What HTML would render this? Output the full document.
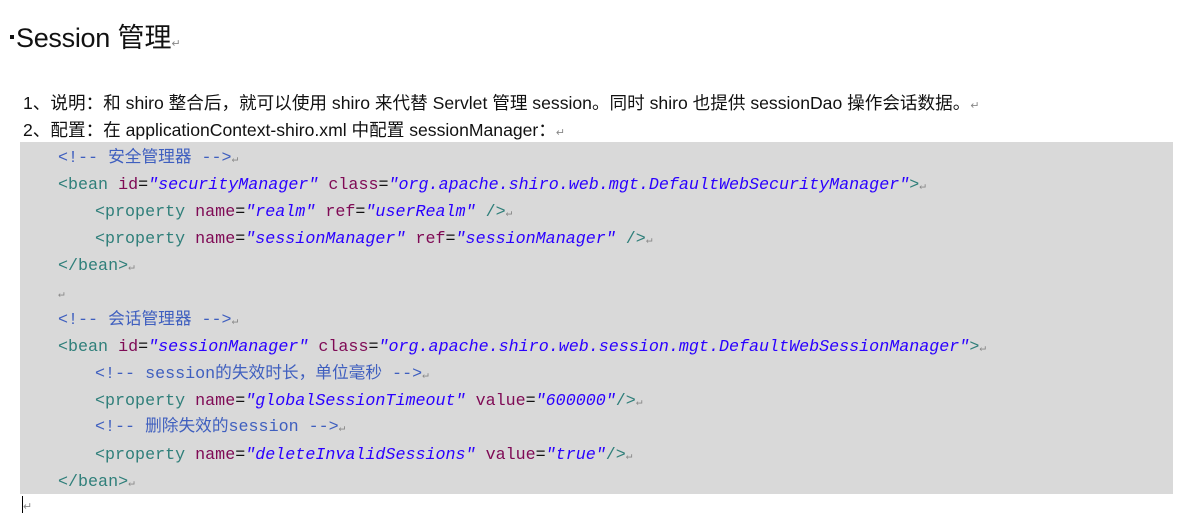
<!DOCTYPE html>
<html><head><meta charset="utf-8"><style>
body{margin:0;width:1201px;height:513px;background:#fff;position:relative;overflow:hidden;font-family:"Liberation Sans","Noto Sans CJK SC",sans-serif;color:#111}
.abs{position:absolute;white-space:pre}
.t{left:10px;top:19px;font-size:27px;line-height:38px}
.p{left:23px;font-size:17.6px;line-height:22px}
.box{position:absolute;left:20px;top:142px;width:1153px;height:352px;background:#d9d9d9}
.c{position:absolute;font-family:"Liberation Mono","Noto Sans CJK SC",monospace;font-size:16.7px;line-height:27px;white-space:pre;left:58px}
.i{left:95px}
.tg{color:#2f7f7a}.a{color:#7f0a55}.v{color:#2a00ff;font-style:italic}.cm{color:#3f5fbf}.k{color:#111}
.r{color:#888;font-size:11px;font-style:normal}
</style></head><body>
<div class="abs t"><span style="display:inline-block;width:4px;height:4px;background:#111;vertical-align:8px;margin-right:2px"></span><span style="letter-spacing:-0.3px">Session</span> 管理<span class="r">↵</span></div>
<div class="abs p" style="top:92px">1、说明：和 shiro 整合后，就可以使用 shiro 来代替 Servlet 管理 session。同时 shiro 也提供 sessionDao 操作会话数据。<span class="r">↵</span></div>
<div class="abs p" style="top:119px">2、配置：在 applicationContext-shiro.xml 中配置 sessionManager：<span class="r">↵</span></div>
<div class="box"></div>
<div class="c" style="top:145px"><span class="cm">&lt;!-- 安全管理器 --&gt;</span><span class="r">↵</span></div>
<div class="c" style="top:172px"><span class="tg">&lt;bean</span> <span class="a">id</span>=<span class="v">"securityManager"</span> <span class="a">class</span>=<span class="v">"org.apache.shiro.web.mgt.DefaultWebSecurityManager"</span><span class="tg">&gt;</span><span class="r">↵</span></div>
<div class="c i" style="top:199px"><span class="tg">&lt;property</span> <span class="a">name</span>=<span class="v">"realm"</span> <span class="a">ref</span>=<span class="v">"userRealm"</span> <span class="tg">/&gt;</span><span class="r">↵</span></div>
<div class="c i" style="top:226px"><span class="tg">&lt;property</span> <span class="a">name</span>=<span class="v">"sessionManager"</span> <span class="a">ref</span>=<span class="v">"sessionManager"</span> <span class="tg">/&gt;</span><span class="r">↵</span></div>
<div class="c" style="top:253px"><span class="tg">&lt;/bean&gt;</span><span class="r">↵</span></div>
<div class="c" style="top:280px"><span class="r">↵</span></div>
<div class="c" style="top:307px"><span class="cm">&lt;!-- 会话管理器 --&gt;</span><span class="r">↵</span></div>
<div class="c" style="top:334px"><span class="tg">&lt;bean</span> <span class="a">id</span>=<span class="v">"sessionManager"</span> <span class="a">class</span>=<span class="v">"org.apache.shiro.web.session.mgt.DefaultWebSessionManager"</span><span class="tg">&gt;</span><span class="r">↵</span></div>
<div class="c i" style="top:361px"><span class="cm">&lt;!-- session的失效时长，单位毫秒 --&gt;</span><span class="r">↵</span></div>
<div class="c i" style="top:388px"><span class="tg">&lt;property</span> <span class="a">name</span>=<span class="v">"globalSessionTimeout"</span> <span class="a">value</span>=<span class="v">"600000"</span><span class="tg">/&gt;</span><span class="r">↵</span></div>
<div class="c i" style="top:414px"><span class="cm">&lt;!-- 删除失效的session --&gt;</span><span class="r">↵</span></div>
<div class="c i" style="top:442px"><span class="tg">&lt;property</span> <span class="a">name</span>=<span class="v">"deleteInvalidSessions"</span> <span class="a">value</span>=<span class="v">"true"</span><span class="tg">/&gt;</span><span class="r">↵</span></div>
<div class="c" style="top:469px"><span class="tg">&lt;/bean&gt;</span><span class="r">↵</span></div>
<div style="position:absolute;left:22px;top:496px;width:1px;height:17px;background:#000"></div>
<div class="abs r" style="left:23px;top:500px">↵</div>
</body></html>
